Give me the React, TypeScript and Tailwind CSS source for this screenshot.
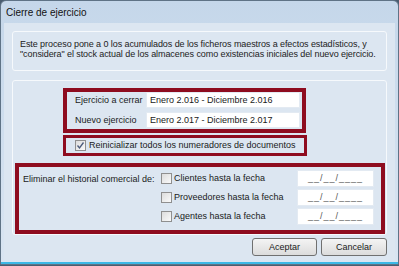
import React from "react";

const font = { fontFamily: '"Liberation Sans", Arial, sans-serif' };

function Check({ checked }: { checked?: boolean }) {
  return (
    <span className="w-[11px] h-[11px] border border-[#8f8f8f] bg-gradient-to-br from-[#dcdcdc] to-[#fafafa] flex items-center justify-center shrink-0">
      {checked && (
        <svg width="9" height="9" viewBox="0 0 9 9">
          <path d="M1.5 4.5 L3.5 7 L7.5 1.5" stroke="#4a5a7a" strokeWidth="1.3" fill="none" />
        </svg>
      )}
    </span>
  );
}

function DateRow({ label }: { label: string }) {
  return (
    <div className="flex items-center h-[17px]">
      <Check />
      <span className="ml-[2px] flex-1">{label}</span>
      <div className="w-[77px] h-[17px] bg-white border border-[#e3eaf2] flex items-center justify-center text-[#555] tracking-[1px]">
        __/__/____
      </div>
    </div>
  );
}

export default function App() {
  return (
    <div
      style={font}
      className="w-[399px] h-[266px] bg-[#4a5d70] text-[9px] text-[#1a1a1a] leading-[11px] relative"
    >
      <div className="absolute inset-x-0 top-0 bottom-[1px] rounded-t-[6px] border border-[#5f7386] bg-gradient-to-b from-[#c5d7ea] to-[#d9e5f2] flex flex-col">
        {/* title */}
        <div className="h-[22px] flex items-center px-[5px] text-[10px] text-[#111]">
          Cierre de ejercicio
        </div>

        {/* client */}
        <div className="flex-1 mx-[3px] mb-[2px] bg-[#dce6f1] px-[8px] pt-[8px] flex flex-col">
          <div className="h-[40px] border border-[#f6f9fc] rounded-[3px] px-[7px] pt-[7px] text-[#222] whitespace-nowrap text-[9px] tracking-[-0.08px] leading-[10px]">
            <div>Este proceso pone a 0 los acumulados de los ficheros maestros a efectos estadísticos, y</div>
            <div>"considera" el stock actual de los almacenes como existencias iniciales del nuevo ejercicio.</div>
          </div>

          <div className="mt-[9px] h-[155px] border border-[#f6f9fc] rounded-[3px] flex flex-col">
            <div className="ml-[50px] mt-[7px] w-[243px] h-[45px] border-[4px] border-[#8e0c1f] pl-[8px] pr-[2px] flex flex-col gap-[4px]">
              <div className="flex items-center h-[16px]">
                <span className="w-[71px]">Ejercicio a cerrar</span>
                <div className="flex-1 h-[16px] bg-white border border-[#e3eaf2] px-[3px] flex items-center">
                  Enero 2.016 - Diciembre 2.016
                </div>
              </div>
              <div className="flex items-center h-[16px]">
                <span className="w-[71px]">Nuevo ejercicio</span>
                <div className="flex-1 h-[16px] bg-white border border-[#e3eaf2] px-[3px] flex items-center">
                  Enero 2.017 - Diciembre 2.017
                </div>
              </div>
            </div>

            <div className="ml-[50px] mt-[2px] w-[244px] h-[21px] border-[3px] border-[#8e0c1f] pl-[9px] flex items-center">
              <Check checked />
              <span className="ml-[3px]">Reinicializar todos los numeradores de documentos</span>
            </div>

            <div className="ml-[2px] mt-[7px] w-[370px] h-[72px] border-[4px] border-[#8e0c1f] pl-[4px] pr-[7px] pt-[3px] flex">
              <div className="w-[138px] pt-[4px] whitespace-nowrap">Eliminar el historial comercial de:</div>
              <div className="flex-1 flex flex-col gap-[2px]">
                <DateRow label="Clientes hasta la fecha" />
                <DateRow label="Proveedores hasta la fecha" />
                <DateRow label="Agentes hasta la fecha" />
              </div>
            </div>
          </div>

          <div className="mt-[3px] flex justify-end gap-[4px]">
            <button className="w-[65px] h-[18px] rounded-[3px] border border-[#707070] bg-gradient-to-b from-[#f4f4f4] to-[#dcdcdc] text-[9px]">
              Aceptar
            </button>
            <button className="w-[66px] h-[18px] rounded-[3px] border border-[#707070] bg-gradient-to-b from-[#f4f4f4] to-[#dcdcdc] text-[9px]">
              Cancelar
            </button>
          </div>
        </div>
        <div className="h-[2px] bg-[#3bb8e6]" />
      </div>
    </div>
  );
}
